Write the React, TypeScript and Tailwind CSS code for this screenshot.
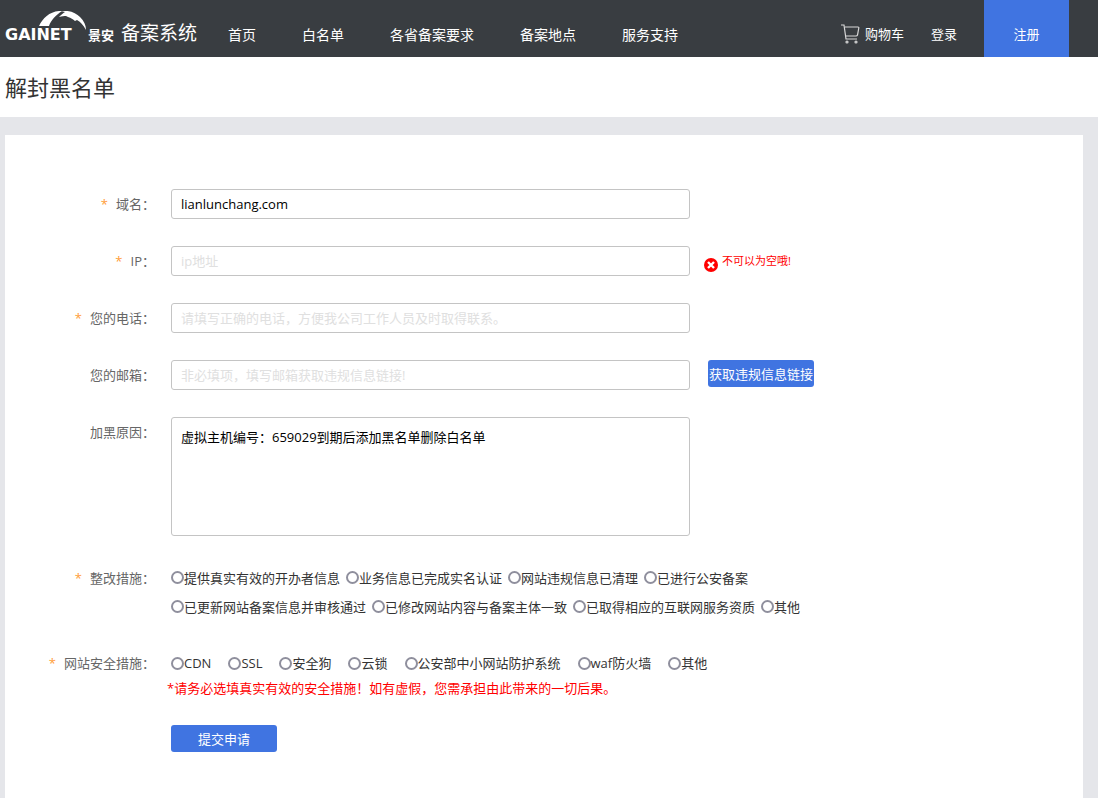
import { useState } from "react";

const NAV = ["首页", "白名单", "各省备案要求", "备案地点", "服务支持"];

const MEASURES = [
  ["提供真实有效的开办者信息", "业务信息已完成实名认证", "网站违规信息已清理", "已进行公安备案"],
  ["已更新网站备案信息并审核通过", "已修改网站内容与备案主体一致", "已取得相应的互联网服务资质", "其他"],
];

const SECURITY = ["CDN", "SSL", "安全狗", "云锁", "公安部中小网站防护系统", "waf防火墙", "其他"];

const field =
  "w-full max-w-[519px] rounded-[3px] border border-[#c4c4c4] bg-white px-[9px] text-black outline-none placeholder:text-[#e0e0e0] focus:border-[#4074e1]";

// ── Header ─────────────────────────────────────────────────────────────────

function Logo() {
  return (
    <a href="#" className="flex items-end text-white">
      <span className="flex w-[83px] flex-col items-start">
        <svg viewBox="0 0 48 20" className="ml-[34px] h-5 w-12" fill="currentColor" aria-hidden="true">
          <path d="M0 15 C4 7 10 1 20 0 L23 0 C17 4 12 9 10 15 Z" />
          <path d="M22 0 C31 -1 37 2 41 6 C45 10 47 14 47 19 C44 14 42 11 38 9 L36 10 C34 8 32 7 29 6 L27 5 C25 5 23 5 20 6 C22 4 24 2 26 1 Z" />
        </svg>
        <span className="font-['DejaVu_Sans',sans-serif] text-[16px] leading-2 font-bold">GAINET</span>
      </span>
      <span className="text-[13px] leading-2 font-bold">景安</span>
      <span className="ml-[7px] text-[19px] leading-3">备案系统</span>
    </a>
  );
}

function CartIcon() {
  return (
    <svg viewBox="0 0 20 20" className="h-5 w-5" fill="none" stroke="#d8d8d8" strokeWidth="1.2" aria-hidden="true">
      <path d="M1 1 H4 L6 15 H17" />
      <path d="M5 3 H18 Q19 3 18.8 4 L17.5 11 Q17.2 12 16 12 H6" />
      <circle cx="7" cy="18" r="1" />
      <circle cx="16" cy="18" r="1" />
    </svg>
  );
}

function Header() {
  return (
    <header className="flex h-[57px] bg-[#393d41] pr-[29px] pl-[5px] text-white">
      <div className="flex items-start pt-[11px]">
        <Logo />
      </div>
      <nav className="ml-[31px] flex items-center gap-[46px] pt-[12px] text-[14px] whitespace-nowrap">
        {NAV.map((item) => (
          <a key={item} href="#">
            {item}
          </a>
        ))}
      </nav>
      <div className="ml-auto flex whitespace-nowrap">
        <a href="#" className="flex items-center gap-[5px] pt-[10px]">
          <CartIcon />
          购物车
        </a>
        <a href="#" className="flex items-center px-[27px] pt-[10px]">
          登录
        </a>
        <a href="#" className="flex w-[85px] items-center justify-center bg-[#4074e1] pt-[10px]">
          注册
        </a>
      </div>
    </header>
  );
}

// ── Form parts ─────────────────────────────────────────────────────────────

function LabelText({ text, required }: { text: string; required?: boolean }) {
  return (
    <>
      {required && <span className="mr-2 text-[#ff9c38]">*</span>}
      {text}：
    </>
  );
}

const labelClass = "w-[150px] shrink-0 text-right leading-[30px] text-[#666]";

function Row({
  id,
  label,
  required,
  children,
}: {
  id: string;
  label: string;
  required?: boolean;
  children: React.ReactNode;
}) {
  return (
    <div className="flex gap-4">
      <label htmlFor={id} className={labelClass}>
        <LabelText text={label} required={required} />
      </label>
      <div className="flex min-w-0 flex-1 items-start">{children}</div>
    </div>
  );
}

function Radio({
  name,
  label,
  value,
  onChange,
}: {
  name: string;
  label: string;
  value: string;
  onChange: (v: string) => void;
}) {
  return (
    <label className="flex items-center whitespace-nowrap">
      <input
        type="radio"
        name={name}
        checked={value === label}
        onChange={() => onChange(label)}
        className="h-[13px] w-[13px] appearance-none rounded-full border-2 border-[#8f8f9d] bg-white checked:border-4 checked:border-[#4074e1]"
      />
      {label}
    </label>
  );
}

function ErrorHint({ text }: { text: string }) {
  return (
    <p className="ml-[14px] flex shrink-0 gap-1 text-[11px] leading-[30px] text-[#ff0000]">
      <svg viewBox="0 0 14 14" className="mt-3 h-[14px] w-[14px]" aria-hidden="true">
        <circle cx="7" cy="7" r="7" fill="#f00" />
        <path d="M4 4 L10 10 M10 4 L4 10" stroke="#fff" strokeWidth="2.4" />
      </svg>
      {text}
    </p>
  );
}

// ── Page ───────────────────────────────────────────────────────────────────

export default function App() {
  const [measure, setMeasure] = useState("");
  const [security, setSecurity] = useState("");

  return (
    <div className="flex min-h-screen flex-col bg-[#e5e6ea] font-['Open_Sans','Noto_Sans_CJK_SC',sans-serif] text-[13px] leading-5 text-[#333]">
      <Header />
      <h1 className="bg-white py-[15px] pl-[5px] text-[22px] leading-[30px]">解封黑名单</h1>

      <main className="mt-[18px] mr-[15px] ml-[5px] flex-1 bg-white pt-[54px] pb-[47px]">
        <form onSubmit={(e) => e.preventDefault()}>
          <div className="flex flex-col gap-[27px]">
            <Row id="domain" label="域名" required>
              <input id="domain" defaultValue="lianlunchang.com" className={`${field} h-[30px]`} />
            </Row>
            <Row id="ip" label="IP" required>
              <input id="ip" placeholder="ip地址" className={`${field} h-[30px]`} />
              <ErrorHint text="不可以为空哦!" />
            </Row>
            <Row id="phone" label="您的电话" required>
              <input
                id="phone"
                placeholder="请填写正确的电话，方便我公司工作人员及时取得联系。"
                className={`${field} h-[30px]`}
              />
            </Row>
            <Row id="email" label="您的邮箱">
              <input id="email" placeholder="非必填项，填写邮箱获取违规信息链接!" className={`${field} h-[30px]`} />
              <button type="button" className="ml-[18px] h-[27px] w-[106px] shrink-0 rounded-[3px] bg-[#4074e1] whitespace-nowrap text-white">
                获取违规信息链接
              </button>
            </Row>
            <Row id="reason" label="加黑原因">
              <textarea
                id="reason"
                defaultValue="虚拟主机编号：659029到期后添加黑名单删除白名单"
                className={`${field} h-[119px] resize-none py-[9px]`}
              />
            </Row>

            <fieldset className="flex gap-4">
              <legend className={`${labelClass} float-left`}>
                <LabelText text="整改措施" required />
              </legend>
              <div className="min-w-0 flex-1">
                {MEASURES.map((row, i) => (
                  <div key={i} className="flex h-[29px] items-center gap-[6px]">
                    {row.map((item) => (
                      <Radio
                        key={item}
                        name="measure"
                        label={item}
                        value={measure}
                        onChange={setMeasure}
                      />
                    ))}
                  </div>
                ))}
              </div>
            </fieldset>

            <fieldset className="flex gap-4">
              <legend className={`${labelClass} float-left`}>
                <LabelText text="网站安全措施" required />
              </legend>
              <div className="min-w-0 flex-1">
                <div className="flex h-[30px] items-center gap-[17px]">
                  {SECURITY.map((item) => (
                    <Radio key={item} name="security" label={item} value={security} onChange={setSecurity} />
                  ))}
                </div>
                <p className="-ml-1 text-[#ff0000]">*请务必选填真实有效的安全措施！如有虚假，您需承担由此带来的一切后果。</p>
              </div>
            </fieldset>

            <button type="submit" className="ml-[166px] h-[27px] w-[106px] rounded-[3px] bg-[#4074e1] text-white">
              提交申请
            </button>
          </div>
        </form>
      </main>
    </div>
  );
}
